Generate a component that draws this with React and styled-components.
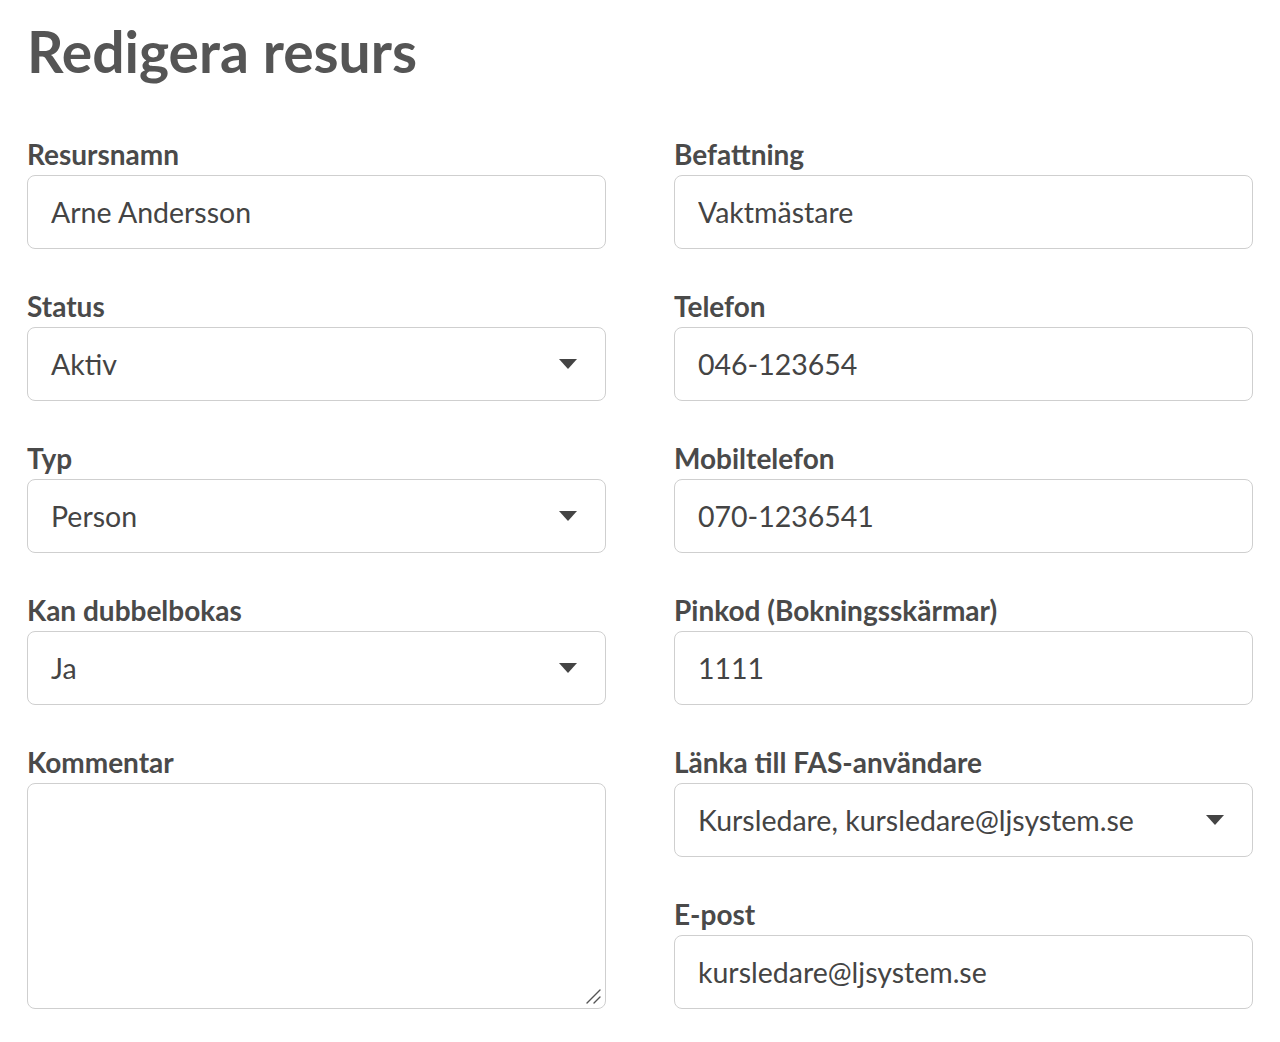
import React from "react";
import styled, { createGlobalStyle } from "styled-components";

const Global = createGlobalStyle`
  body {
    margin: 0;
    background: #fff;
    font-family: Lato, "Open Sans", sans-serif;
    color: #444;
  }
  * { box-sizing: border-box; }
`;

const Page = styled.div`
  padding: 18px 27px 30px;
`;

const Title = styled.h1`
  margin: 0 0 53px;
  font-size: 57px;
  line-height: 67px;
  font-weight: 700;
  color: #555;
`;

const Columns = styled.div`
  display: grid;
  grid-template-columns: 1fr 1fr;
  column-gap: 68px;
`;

const Column = styled.div`
  display: flex;
  flex-direction: column;
  gap: 41px;
`;

const Field = styled.div`
  display: flex;
  flex-direction: column;
  gap: 5px;
`;

const Label = styled.label`
  font-size: 28px;
  line-height: 32px;
  font-weight: 700;
  color: #4a4a4a;
`;

const Input = styled.input`
  height: 74px;
  width: 100%;
  padding: 0 23px;
  border: 1.5px solid #cfcfcf;
  border-radius: 8px;
  font-family: inherit;
  font-size: 28.5px;
  color: #444;
  background: #fff;
  outline: none;
`;

const SelectBox = styled.div`
  position: relative;
  display: flex;
  align-items: center;
  height: 74px;
  padding: 0 23px;
  border: 1.5px solid #cfcfcf;
  border-radius: 8px;
  font-size: 28.5px;
  color: #444;
  background: #fff;
`;

const Caret = styled.span`
  position: absolute;
  right: 28px;
  top: 50%;
  margin-top: -5px;
  width: 0;
  height: 0;
  border-left: 9px solid transparent;
  border-right: 9px solid transparent;
  border-top: 10px solid #444;
`;

const AreaWrap = styled.div`
  position: relative;
`;

const TextArea = styled.textarea`
  display: block;
  height: 226px;
  width: 100%;
  padding: 16px 23px;
  border: 1.5px solid #cfcfcf;
  border-radius: 8px;
  font-family: inherit;
  font-size: 28.5px;
  color: #444;
  resize: none;
  outline: none;
`;

const Grip = styled.svg`
  position: absolute;
  right: 5px;
  bottom: 5px;
  pointer-events: none;
`;

const TextField = ({ label, value }) => (
  <Field>
    <Label>{label}</Label>
    <Input defaultValue={value} />
  </Field>
);

const SelectField = ({ label, value }) => (
  <Field>
    <Label>{label}</Label>
    <SelectBox>
      {value}
      <Caret />
    </SelectBox>
  </Field>
);

export default function App() {
  return (
    <Page>
      <Global />
      <Title>Redigera resurs</Title>
      <Columns>
        <Column>
          <TextField label="Resursnamn" value="Arne Andersson" />
          <SelectField label="Status" value="Aktiv" />
          <SelectField label="Typ" value="Person" />
          <SelectField label="Kan dubbelbokas" value="Ja" />
          <Field>
            <Label>Kommentar</Label>
            <AreaWrap>
              <TextArea />
              <Grip width="16" height="16" viewBox="0 0 16 16">
                <path d="M2 15 L15 2 M9 15 L15 9" stroke="#555" strokeWidth="1.4" strokeLinecap="round" fill="none" />
              </Grip>
            </AreaWrap>
          </Field>
        </Column>
        <Column>
          <TextField label="Befattning" value="Vaktmästare" />
          <TextField label="Telefon" value="046-123654" />
          <TextField label="Mobiltelefon" value="070-1236541" />
          <TextField label="Pinkod (Bokningsskärmar)" value="1111" />
          <SelectField label="Länka till FAS-användare" value="Kursledare, kursledare@ljsystem.se" />
          <TextField label="E-post" value="kursledare@ljsystem.se" />
        </Column>
      </Columns>
    </Page>
  );
}
